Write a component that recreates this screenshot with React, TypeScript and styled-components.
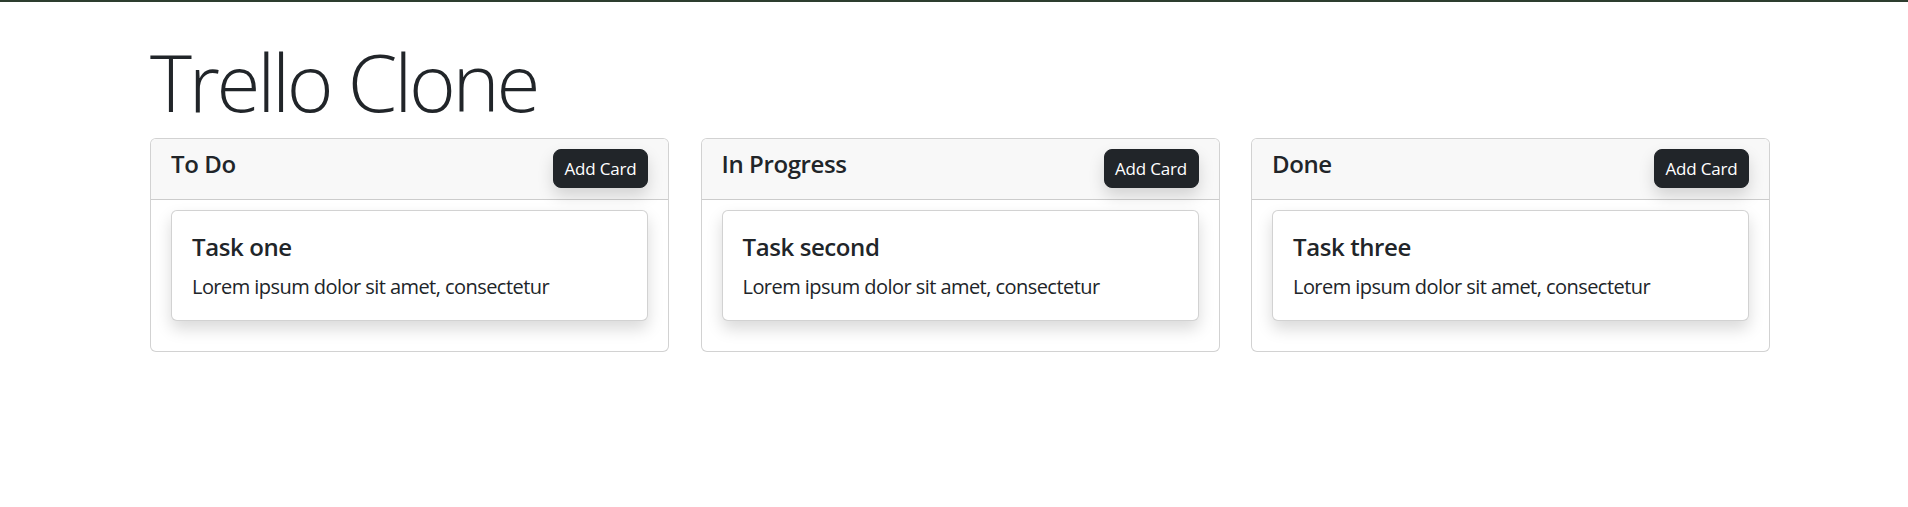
import React from "react";
import styled, { createGlobalStyle } from "styled-components";

const GlobalStyle = createGlobalStyle`
  html, body {
    margin: 0;
    padding: 0;
    background: #ffffff;
  }
  body {
    font-family: "Open Sans", "Noto Sans", "Liberation Sans", sans-serif;
    color: #212529;
    -webkit-font-smoothing: antialiased;
  }
  * { box-sizing: border-box; }
`;

const TopBar = styled.div`
  height: 2px;
  background: #2d3d2f;
`;

const Page = styled.main`
  width: 1770px;
  padding-left: 150px;
`;

const Title = styled.h1`
  margin: 31px 0 0 0;
  font-size: 80px;
  font-weight: 300;
  line-height: 96px;
  letter-spacing: -3.3px;
  color: #212529;
`;

const Board = styled.div`
  display: grid;
  grid-template-columns: repeat(3, 1fr);
  gap: 31.5px;
  margin-top: 9px;
  align-items: start;
`;

const Column = styled.section`
  border: 1px solid rgba(0, 0, 0, 0.175);
  border-radius: 6px;
  background: #ffffff;
  overflow: hidden;
`;

const ColumnHeader = styled.header`
  height: 61px;
  display: flex;
  justify-content: space-between;
  align-items: flex-start;
  padding: 10px 20px 0 20px;
  background: #f8f8f8;
  border-bottom: 1px solid rgba(0, 0, 0, 0.175);
`;

const ColumnTitle = styled.h4`
  margin: 1px 0 0 0;
  font-size: 24px;
  font-weight: 600;
  line-height: 28.8px;
  letter-spacing: -0.4px;
`;

const AddButton = styled.button`
  width: 95px;
  height: 39px;
  padding: 0;
  border: 1px solid #212529;
  border-radius: 8px;
  background: #212529;
  color: #ffffff;
  font-family: inherit;
  font-size: 17px;
  line-height: 24px;
  letter-spacing: -0.2px;
  box-shadow: 0 8px 16px rgba(0, 0, 0, 0.15);
  cursor: pointer;
`;

const ColumnBody = styled.div`
  padding: 10px 20px 30px 20px;
`;

const TaskCard = styled.article`
  border: 1px solid rgba(0, 0, 0, 0.175);
  border-radius: 6px;
  background: #ffffff;
  padding: 22px 20px 18px 20px;
  box-shadow: 0 8px 16px rgba(0, 0, 0, 0.15);
`;

const TaskTitle = styled.h5`
  margin: 0 0 10px 0;
  font-size: 24px;
  font-weight: 600;
  line-height: 28.8px;
  letter-spacing: -0.4px;
`;

const TaskText = styled.p`
  margin: 0;
  font-size: 20px;
  line-height: 30px;
  letter-spacing: -0.55px;
`;

const columns = [
  { name: "To Do", task: "Task one" },
  { name: "In Progress", task: "Task second" },
  { name: "Done", task: "Task three" },
];

export default function App() {
  return (
    <>
      <GlobalStyle />
      <TopBar />
      <Page>
        <Title>Trello Clone</Title>
        <Board>
          {columns.map((c) => (
            <Column key={c.name}>
              <ColumnHeader>
                <ColumnTitle>{c.name}</ColumnTitle>
                <AddButton>Add Card</AddButton>
              </ColumnHeader>
              <ColumnBody>
                <TaskCard>
                  <TaskTitle>{c.task}</TaskTitle>
                  <TaskText>Lorem ipsum dolor sit amet, consectetur</TaskText>
                </TaskCard>
              </ColumnBody>
            </Column>
          ))}
        </Board>
      </Page>
    </>
  );
}
